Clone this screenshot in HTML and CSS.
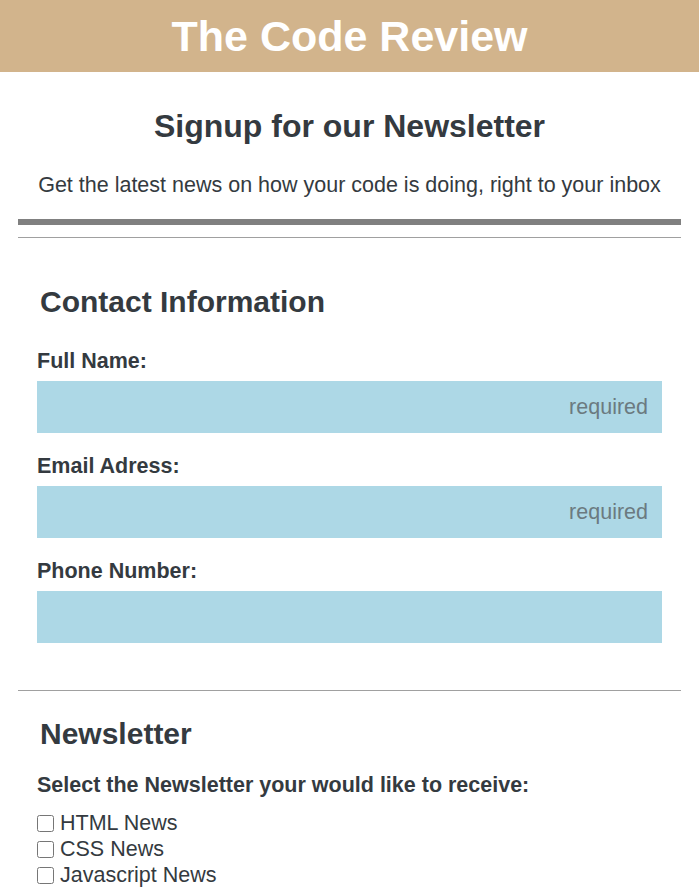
FILE: index.html
```html
<!DOCTYPE html>
<html>
<head>
<meta charset="utf-8">
<link rel="stylesheet" href="styles.css">
</head>
<body>
<header class="banner"><h1 class="site-title">The Code Review</h1></header>
<main class="page">
  <section class="intro">
    <h2 class="intro-title">Signup for our Newsletter</h2>
    <p class="intro-text">Get the latest news on how your code is doing, right to your inbox</p>
  </section>
  <hr class="rule-thick">
  <hr class="rule-thin">
  <section class="block">
    <h3 class="block-title">Contact Information</h3>
    <label class="field-label first-label" for="name">Full Name:</label>
    <input class="field" id="name" type="text" placeholder="required">
    <label class="field-label" for="email">Email Adress:</label>
    <input class="field" id="email" type="email" placeholder="required">
    <label class="field-label" for="phone">Phone Number:</label>
    <input class="field" id="phone" type="tel">
  </section>
  <hr class="rule-thin rule-mid">
  <section class="block">
    <h3 class="block-title nl-title">Newsletter</h3>
    <p class="field-label select-label">Select the Newsletter your would like to receive:</p>
    <label class="check"><input type="checkbox"> HTML News</label>
    <label class="check"><input type="checkbox"> CSS News</label>
    <label class="check"><input type="checkbox"> Javascript News</label>
  </section>
</main>
</body>
</html>
```
FILE: styles.css
```css
* { box-sizing: border-box; }
body {
  margin: 0;
  font-family: "Liberation Sans", Arial, sans-serif;
  color: #343a40;
  background: #fff;
}
.banner {
  background: #d2b48c;
  height: 72px;
  display: flex;
  align-items: center;
  justify-content: center;
}
.site-title {
  margin: 0;
  color: #fff;
  font-size: 43px;
  font-weight: bold;
  line-height: 1;
}
.page { padding: 0 18px; }
.intro { text-align: center; }
.intro-title {
  margin: 35px 0 0;
  font-size: 32px;
  line-height: 38px;
}
.intro-text {
  margin: 27px 0 0;
  font-size: 21.5px;
  line-height: 26px;
}
.rule-thick {
  margin: 21px 0 0;
  border: 0;
  height: 6px;
  background: #808080;
}
.rule-thin {
  margin: 12px 0 0;
  border: 0;
  height: 1px;
  background: #a0a0a0;
}
.block { padding: 0 19px; }
.block-title {
  margin: 47px 0 0 3px;
  font-size: 30px;
  line-height: 34px;
}
.field-label {
  display: block;
  margin: 20px 0 0;
  font-size: 21.5px;
  font-weight: bold;
  line-height: 26px;
}
.field-label.first-label { margin-top: 29px; }
.field {
  display: block;
  width: 100%;
  height: 52px;
  margin: 7px 0 0;
  border: 0;
  background: #add8e6;
  font-family: inherit;
  font-size: 21.5px;
  padding: 0 14px;
  text-align: right;
  color: #343a40;
}
.field::placeholder { color: #6b7a80; }
.rule-mid { margin-top: 47px; }
.block-title.nl-title { margin-top: 26px; }
.field-label.select-label { margin-top: 21px; }
.check {
  display: flex;
  align-items: center;
  gap: 6px;
  font-size: 21.5px;
  line-height: 26px;
}
.select-label + .check { margin-top: 12px; }
.check input {
  margin: 0;
  width: 17px;
  height: 17px;
}
```
